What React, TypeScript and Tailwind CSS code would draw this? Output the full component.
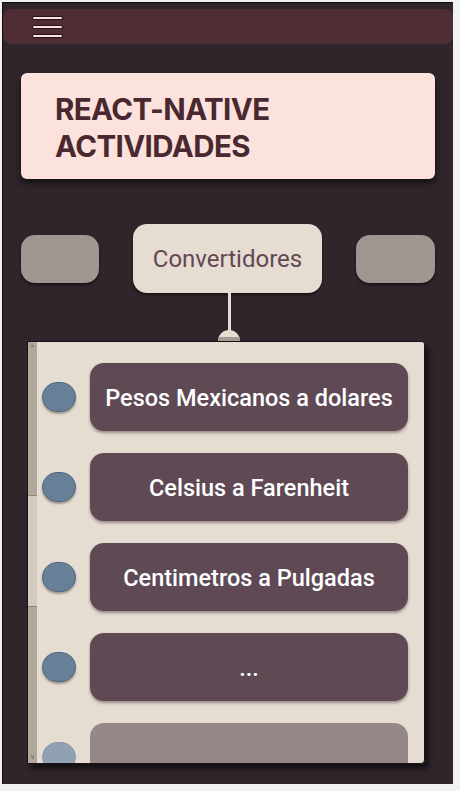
import React from 'react';

const items = [
  { label: 'Pesos Mexicanos a dolares' },
  { label: 'Celsius a Farenheit' },
  { label: 'Centimetros a Pulgadas' },
  { label: '...' },
];

function Hamburger() {
  return (
    <div className="flex w-[29px] flex-col gap-[7px]">
      {[0, 1, 2].map((i) => (
        <span key={i} className="block h-[2px] w-full rounded-full bg-[#f8e1e4] shadow-[0_0_0_1px_#2a1419]" />
      ))}
    </div>
  );
}

function Scrollbar() {
  return (
    <div className="flex w-[9px] shrink-0 flex-col bg-[#b1a89b]">
      <div className="flex h-[12px] items-center justify-center text-[8px] leading-none text-[#6b6459]">^</div>
      <div className="h-[141px]" />
      <div className="h-[112px] border-y border-[#8f877b] bg-[#d3cbbf]" />
      <div className="flex-1" />
      <div className="flex h-[12px] items-center justify-center text-[8px] leading-none text-[#6b6459]">v</div>
    </div>
  );
}

export default function App() {
  return (
    <div className="min-h-[791px] bg-[#f3f2f2] pl-[2px] pt-[2px]" style={{ fontFamily: 'Roboto, sans-serif' }}>
      <div className="flex h-[782px] w-[451px] flex-col overflow-hidden border-l border-t border-[#120c0f] bg-[#2f252b]">
        <header className="mt-[6px] flex h-[35px] items-center rounded-[8px] bg-[#4f2d35] pl-[30px]">
          <Hamburger />
        </header>

        <div className="mx-[18px] mt-[29px] flex h-[106px] flex-col justify-center rounded-[6px] bg-[#fbe2dc] pl-[34px] shadow-[0_4px_6px_rgba(0,0,0,0.6)]">
          <h1
            className="mt-[4px] text-[29.5px] font-bold leading-[37px] tracking-[-0.6px] text-[#4a2830]"
            style={{ fontFamily: 'Inter, "Liberation Sans", sans-serif' }}
          >
            REACT-NATIVE
            <br />
            ACTIVIDADES
          </h1>
        </div>

        <div className="mx-[18px] mt-[45px] flex h-[69px] items-center justify-between">
          <div className="h-[48px] w-[78px] rounded-[14px] bg-[#9f9591] shadow-[0_2px_3px_rgba(0,0,0,0.5)]" />
          <div className="flex h-[69px] w-[189px] items-center justify-center rounded-[14px] bg-[#e5dcd2] text-[24px] text-[#634752] shadow-[0_2px_3px_rgba(0,0,0,0.5)]">
            Convertidores
          </div>
          <div className="h-[48px] w-[79px] rounded-[14px] bg-[#9f9591] shadow-[0_2px_3px_rgba(0,0,0,0.5)]" />
        </div>

        <div className="relative ml-[225px] h-[48px] w-[3px] bg-[#e5dcd2]">
          <div className="absolute bottom-0 left-[-10px] h-[11px] w-[22px] rounded-t-full bg-[#e5dcd2]">
            <div className="absolute bottom-0 left-0 h-[4px] w-full bg-[#a29c92]" />
          </div>
        </div>

        <div className="ml-[24px] flex h-[423px] w-[398px] overflow-hidden rounded-br-[4px] rounded-tr-[3px] border border-[#1a1216] bg-[#e5dcd2] shadow-[4px_5px_5px_rgba(0,0,0,0.55)]">
          <Scrollbar />
          <ul className="flex flex-1 flex-col gap-[22px] pl-[5px] pr-[16px] pt-[21px]">
            {items.map((it) => (
              <li key={it.label} className="flex shrink-0 items-center gap-[14px]">
                <span className="h-[30px] w-[34px] shrink-0 rounded-full border border-[#4a6a89] bg-[#677f97] shadow-[0_2px_2px_rgba(90,70,50,0.45)]" />
                <div className="flex h-[68px] flex-1 items-center justify-center rounded-[14px] bg-[#5e4955] pt-[3px] text-[23.5px] font-medium text-white shadow-[0_2px_3px_rgba(60,40,40,0.45)]">
                  {it.label}
                </div>
              </li>
            ))}
            <li className="flex shrink-0 items-center gap-[14px]">
              <span className="h-[30px] w-[34px] shrink-0 rounded-full border border-[#8498ab] bg-[#90a2b2]" />
              <div className="h-[68px] flex-1 rounded-[14px] bg-[#968889]" />
            </li>
          </ul>
        </div>
      </div>
    </div>
  );
}
